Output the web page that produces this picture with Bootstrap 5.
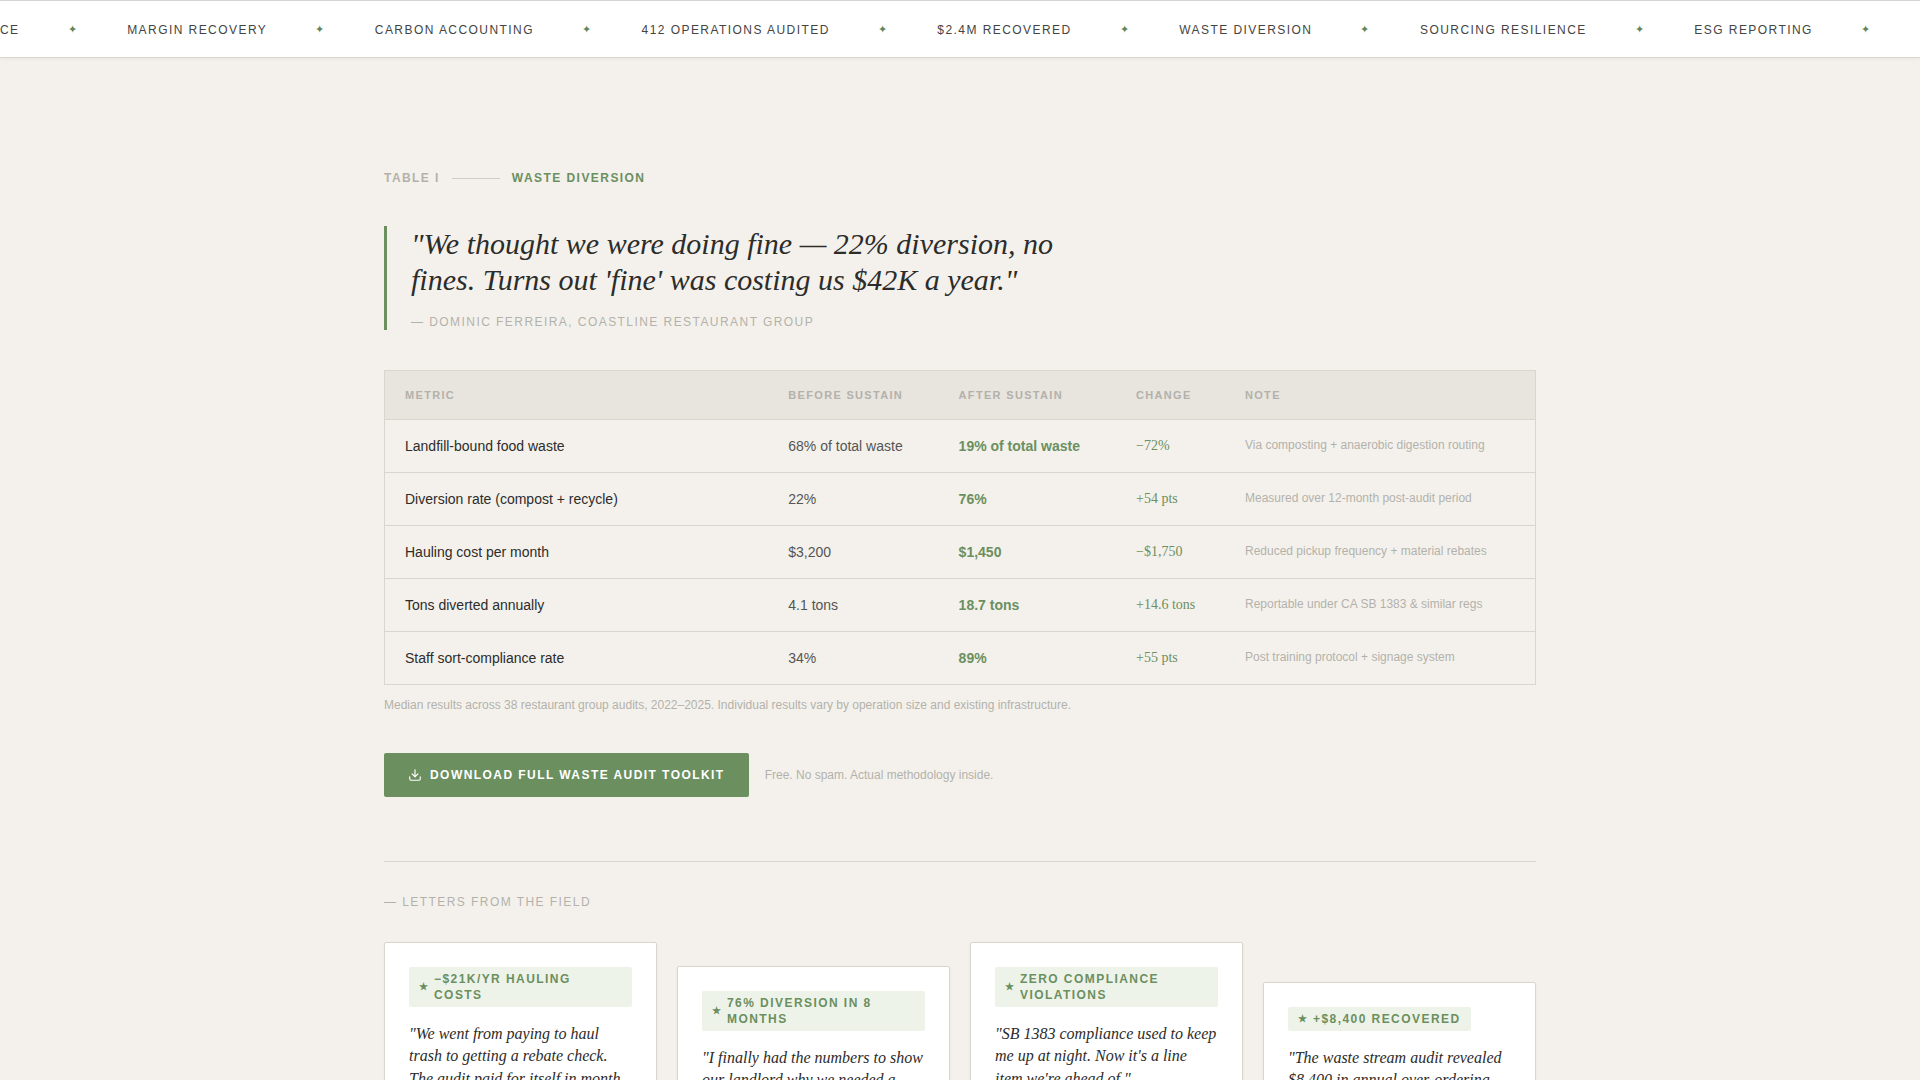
<!DOCTYPE html>
<html lang="en">
<head>
  <meta charset="UTF-8">
  <title>Waste Diversion</title>
  <link href="https://cdn.jsdelivr.net/npm/bootstrap@5.3.2/dist/css/bootstrap.min.css" rel="stylesheet">
  <style>
    body { background: #f4f1ec; font-family: "Liberation Sans", Arial, sans-serif; color: #2c2c2a; }
    .ticker-bar { background: #fff; border-top: 1px solid #d6d5d2; border-bottom: 1px solid #d9d6d0; height: 58px; padding-top: 1px; box-shadow: 0 1px 4px rgba(0,0,0,.05); }
    .ticker-track { transform: translateX(-74.2px); white-space: nowrap; }
    .ticker-word { font-size: 12px; letter-spacing: .12em; color: #444442; }
    .ticker-star { font-size: 11px; letter-spacing: 1px; color: #648559; margin: 0 49.6px 0 48px; }
    .page-wrap { width: 1152px; padding-top: 111px; }
    .eyebrow { font-size: 12px; font-weight: 700; letter-spacing: .12em; line-height: 18px; }
    .eyebrow-muted { color: #b3b1ab; }
    .eyebrow-line { width: 48px; height: 1px; background: #d2cec7; }
    .eyebrow-green { color: #6b8f5e; }
    .pull-quote { border-left: 3px solid #6b8f5e; padding: 0 0 0 24px; margin: 39px 0 40px; max-width: 672px; }
    .pull-quote p { font-family: "Liberation Serif", "Times New Roman", serif; font-style: italic; font-size: 30px; line-height: 36px; margin: 0 0 16px; }
    .pull-quote footer { font-size: 12px; letter-spacing: .12em; color: #b3b1ab; line-height: 16px; }
    .data-wrap { border: 1px solid #d9d6d0; }
    .data-table { --bs-table-bg: transparent; margin: 0; border-color: #d9d6d0; table-layout: fixed; }
    .data-table th:nth-child(1) { width: 383.3px; }
    .data-table th:nth-child(2) { width: 170.3px; }
    .data-table th:nth-child(3) { width: 177.4px; }
    .data-table th:nth-child(4) { width: 109px; }
    .data-table thead th { background: #e8e4de; font-size: 11px; font-weight: 700; letter-spacing: .12em; color: #b3b1ab; padding: 16px 20px; line-height: 16px; white-space: nowrap; }
    .data-table tbody td { font-size: 14px; padding: 16px 20px; line-height: 20px; color: #555553; vertical-align: middle; white-space: nowrap; }
    .data-table tbody td:first-child { color: #2c2c2a; }
    .data-table tbody tr:last-child td { border-bottom: 0; }
    .data-table tbody .cell-after { color: #6b8f5e; font-weight: 700; }
    .data-table tbody .cell-change { font-family: "Liberation Serif", "Times New Roman", serif; color: #6b8f5e; }
    .data-table tbody .cell-note { font-size: 12px; color: #b3b1ab; padding-top: 15px; padding-bottom: 17px; }
    .table-note { font-size: 12px; color: #b3b1ab; margin: 11px 0 39px; line-height: 18px; }
    .btn-sage { background: #6b8f5e; color: #fff; border: 0; border-radius: 2px; font-size: 12px; font-weight: 700; letter-spacing: .12em; padding: 12px 24px; line-height: 20px; height: 44px; }
    .cta-note { font-size: 12px; color: #b3b1ab; }
    .field-rule { border-color: #d9d6d0; opacity: 1; margin: 64px 0 31px; }
    .letters-head { font-size: 12px; letter-spacing: .12em; color: #b3b1ab; line-height: 18px; margin-bottom: 31px; }
    .letter-grid { display: grid; grid-template-columns: repeat(4, 1fr); gap: 20px; align-items: start; padding-bottom: 60px; }
    .letter-card { background: #fff; border: 1px solid #d9d6d0; border-radius: 2px; padding: 24px; box-shadow: 0 1px 3px rgba(0,0,0,.05); }
    .offset-two { margin-top: 24px; }
    .offset-four { margin-top: 40px; }
    .result-tag { display: flex; align-items: center; gap: 6px; background: #eef3ea; color: #6b8f5e; font-size: 12px; font-weight: 700; letter-spacing: .12em; line-height: 16px; padding: 4px 10px; border-radius: 2px; margin-bottom: 16px; }
    .result-tag span:first-child { font-size: 10px; letter-spacing: 0; }
    .letter-text { font-family: "Liberation Serif", "Times New Roman", serif; font-style: italic; font-size: 16px; line-height: 22.4px; margin: 0; }
  </style>
</head>
<body>

  <div class="ticker-bar overflow-hidden d-flex align-items-center">
    <div class="ticker-track d-flex align-items-center">
      <span class="ticker-word">COMPLIANCE</span><span class="ticker-star">✦</span>
      <span class="ticker-word">MARGIN RECOVERY</span><span class="ticker-star">✦</span>
      <span class="ticker-word">CARBON ACCOUNTING</span><span class="ticker-star">✦</span>
      <span class="ticker-word">412 OPERATIONS AUDITED</span><span class="ticker-star">✦</span>
      <span class="ticker-word">$2.4M RECOVERED</span><span class="ticker-star">✦</span>
      <span class="ticker-word">WASTE DIVERSION</span><span class="ticker-star">✦</span>
      <span class="ticker-word">SOURCING RESILIENCE</span><span class="ticker-star">✦</span>
      <span class="ticker-word">ESG REPORTING</span><span class="ticker-star">✦</span>
    </div>
  </div>

  <main class="page-wrap mx-auto">
    <div class="d-flex align-items-center gap-2 eyebrow">
      <span class="eyebrow-muted">TABLE I</span>
      <span class="eyebrow-line mx-1"></span>
      <span class="eyebrow-green">WASTE DIVERSION</span>
    </div>

    <blockquote class="pull-quote">
      <p>"We thought we were doing fine — 22% diversion, no fines. Turns out 'fine' was costing us $42K a year."</p>
      <footer>— DOMINIC FERREIRA, COASTLINE RESTAURANT GROUP</footer>
    </blockquote>

    <div class="data-wrap">
      <table class="table data-table">
        <thead>
          <tr><th>METRIC</th><th>BEFORE SUSTAIN</th><th>AFTER SUSTAIN</th><th>CHANGE</th><th>NOTE</th></tr>
        </thead>
        <tbody>
          <tr><td>Landfill-bound food waste</td><td>68% of total waste</td><td class="cell-after">19% of total waste</td><td class="cell-change">−72%</td><td class="cell-note">Via composting + anaerobic digestion routing</td></tr>
          <tr><td>Diversion rate (compost + recycle)</td><td>22%</td><td class="cell-after">76%</td><td class="cell-change">+54 pts</td><td class="cell-note">Measured over 12-month post-audit period</td></tr>
          <tr><td>Hauling cost per month</td><td>$3,200</td><td class="cell-after">$1,450</td><td class="cell-change">−$1,750</td><td class="cell-note">Reduced pickup frequency + material rebates</td></tr>
          <tr><td>Tons diverted annually</td><td>4.1 tons</td><td class="cell-after">18.7 tons</td><td class="cell-change">+14.6 tons</td><td class="cell-note">Reportable under CA SB 1383 &amp; similar regs</td></tr>
          <tr><td>Staff sort-compliance rate</td><td>34%</td><td class="cell-after">89%</td><td class="cell-change">+55 pts</td><td class="cell-note">Post training protocol + signage system</td></tr>
        </tbody>
      </table>
    </div>
    <p class="table-note">Median results across 38 restaurant group audits, 2022–2025. Individual results vary by operation size and existing infrastructure.</p>

    <div class="d-flex align-items-center gap-3">
      <button type="button" class="btn btn-sage d-inline-flex align-items-center gap-2">
        <svg width="14" height="14" viewBox="0 0 24 24" fill="none" stroke="currentColor" stroke-width="2" stroke-linecap="round" stroke-linejoin="round"><path d="M21 15v4a2 2 0 0 1-2 2H5a2 2 0 0 1-2-2v-4"/><path d="M7 10l5 5 5-5"/><path d="M12 15V3"/></svg>
        DOWNLOAD FULL WASTE AUDIT TOOLKIT
      </button>
      <span class="cta-note">Free. No spam. Actual methodology inside.</span>
    </div>

    <hr class="field-rule">
    <div class="letters-head">— LETTERS FROM THE FIELD</div>

    <div class="letter-grid">
      <div class="letter-card d-flex flex-column align-items-start">
        <div class="result-tag"><span>★</span><span>−$21K/YR HAULING COSTS</span></div>
        <p class="letter-text">"We went from paying to haul trash to getting a rebate check. The audit paid for itself in month one."</p>
      </div>
      <div class="letter-card offset-two d-flex flex-column align-items-start">
        <div class="result-tag"><span>★</span><span>76% DIVERSION IN 8 MONTHS</span></div>
        <p class="letter-text">"I finally had the numbers to show our landlord why we needed a second bin."</p>
      </div>
      <div class="letter-card d-flex flex-column align-items-start">
        <div class="result-tag"><span>★</span><span>ZERO COMPLIANCE VIOLATIONS</span></div>
        <p class="letter-text">"SB 1383 compliance used to keep me up at night. Now it's a line item we're ahead of."</p>
      </div>
      <div class="letter-card offset-four d-flex flex-column align-items-start">
        <div class="result-tag"><span>★</span><span>+$8,400 RECOVERED</span></div>
        <p class="letter-text">"The waste stream audit revealed $8,400 in annual over-ordering we never saw."</p>
      </div>
    </div>
  </main>

  <script src="https://cdn.jsdelivr.net/npm/bootstrap@5.3.2/dist/js/bootstrap.bundle.min.js"></script>
</body>
</html>
